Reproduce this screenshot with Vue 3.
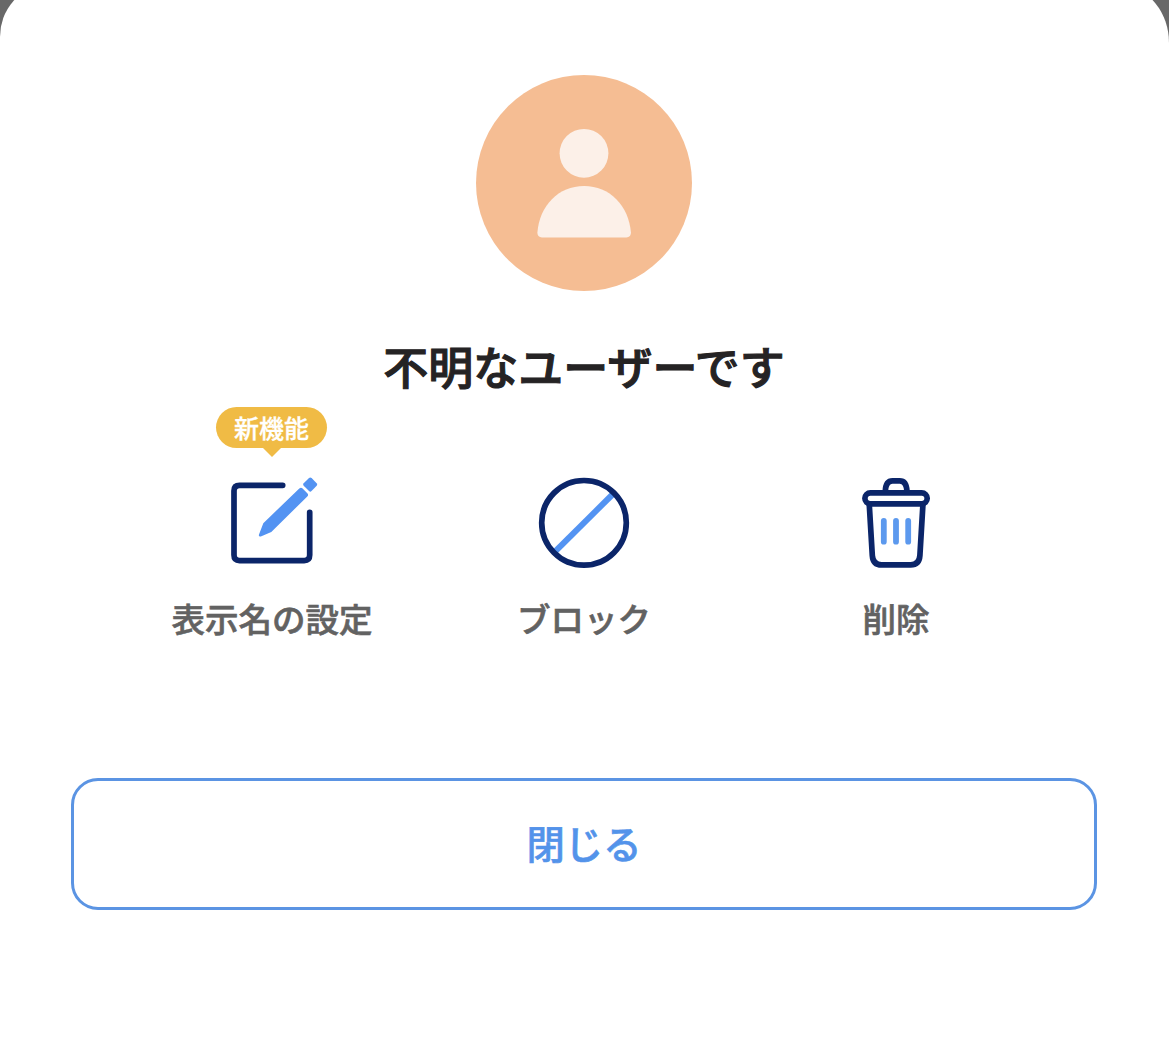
<script setup>
const actions = [
  { id: 'rename', label: '表示名の設定', badge: '新機能' },
  { id: 'block', label: 'ブロック' },
  { id: 'delete', label: '削除' },
]
</script>

<template>
  <div class="backdrop">
    <main class="sheet">
      <svg class="avatar" viewBox="0 0 216 216" aria-hidden="true">
        <circle cx="108" cy="108" r="108" fill="#f5bd93" />
        <circle cx="108" cy="78.3" r="24.4" fill="#fcf0e8" />
        <path
          d="M66 162.500C63 162.500 61.200 160.300 61.400 157.300C63.500 130.500 82.500 110.900 108.100 110.900C133.700 110.900 152.700 130.500 154.900 157.300C155.100 160.300 153.300 162.500 150.300 162.500Z"
          fill="#fcf0e8"
        />
      </svg>
      <h1 class="title">不明なユーザーです</h1>
      <div class="actions">
        <button v-for="action in actions" :key="action.id" class="action" type="button">
          <span v-if="action.badge" class="badge">{{ action.badge }}</span>
          <svg v-if="action.id === 'rename'" class="icon" viewBox="0 0 100 100">
            <path class="line" d="M60.700 12.300H17.500Q12 12.300 12 17.800V82.100Q12 87.600 17.500 87.600H82.200Q87.700 87.600 87.700 82.100V39.300" />
            <path class="fill" d="M37 61.500L41.300 50.200L77.300 15.500Q79 13.900 80.600 15.500L85.300 20.200Q86.900 21.900 85.300 23.500L49.300 58.900L38.800 63.500Q36.300 64 37 61.500Z" />
            <path class="fill" d="M81.700 10.300L87 5.100Q88.300 4 89.600 5.100L94.600 10.200Q95.800 11.500 94.700 12.800L89.500 18.100Q88.300 19.200 87 18L81.700 12.800Q80.500 11.500 81.700 10.300Z" />
          </svg>
          <svg v-else-if="action.id === 'block'" class="icon" viewBox="0 0 100 100">
            <path class="slash" d="M21 78.700L79.500 20.500" />
            <circle class="line" cx="50" cy="49.800" r="42.300" />
          </svg>
          <svg v-else class="icon" viewBox="0 0 100 100">
            <path class="line" d="M39.300 18.500C39.500 11.500 42 7.900 46.500 7.900H53.700C58.200 7.900 60.700 11.500 61 18.500" />
            <rect class="line" x="18.900" y="19.800" width="62.300" height="11" rx="5.500" />
            <path class="line" d="M23.300 32L26.300 82.500Q27 91.900 35.500 91.900H64.700Q73.200 91.900 73.900 82.500L76.900 32" />
            <path class="bars" d="M37.800 47.800V68.700M50 47.800V68.700M62.200 47.800V68.700" />
          </svg>
          <span class="label">{{ action.label }}</span>
        </button>
      </div>
      <button class="close" type="button"><span>閉じる</span></button>
    </main>
  </div>
</template>

<style>
body {
  margin: 0;
  background: #fff;
}
</style>

<style scoped>
.backdrop {
  height: 1051px;
  overflow: hidden;
  background: #686868;
  font-family: "Noto Sans CJK JP", "Noto Sans", sans-serif;
}
.sheet {
  box-sizing: border-box;
  height: 1064px;
  margin-top: -13px;
  padding: 88px 72px 0 71px;
  display: flex;
  flex-direction: column;
  align-items: center;
  background: #fff;
  border-radius: 44px 46px 0 0 / 50px 56px 0 0;
}
.avatar {
  width: 216px;
  height: 216px;
  flex: none;
}
.title {
  margin: 40px 0 0;
  height: 70px;
  font-size: 45px;
  line-height: 70px;
  font-weight: 500;
  -webkit-text-stroke: 1.100px #252324;
  color: #252324;
  white-space: nowrap;
}
.actions {
  display: flex;
  margin-top: 72px;
}
.action {
  position: relative;
  width: 312px;
  padding: 0;
  display: flex;
  flex-direction: column;
  align-items: center;
  border: 0;
  background: none;
  font-family: inherit;
}
.icon {
  width: 100px;
  height: 100px;
}
.line {
  fill: none;
  stroke: #0b2569;
  stroke-width: 5.700;
  stroke-linecap: round;
  stroke-linejoin: round;
}
.fill {
  fill: #5393f2;
}
.slash {
  stroke: #5393f2;
  stroke-width: 6;
}
.bars {
  stroke: #5c99ee;
  stroke-width: 5.800;
  stroke-linecap: round;
}
.label {
  margin-top: 20px;
  font-size: 33.500px;
  line-height: 50px;
  font-weight: 500;
  -webkit-text-stroke: 0.600px #626262;
  color: #626262;
  white-space: nowrap;
}
.badge {
  position: absolute;
  top: -66.500px;
  left: 100px;
  width: 111px;
  height: 41.500px;
  border-radius: 21px;
  background: #f0bb45;
  color: #fff;
  font-size: 25px;
  line-height: 40px;
  font-weight: 500;
  -webkit-text-stroke: 0.300px #fff;
  text-align: center;
}
.badge::after {
  content: "";
  position: absolute;
  top: 41px;
  left: 46.500px;
  border: 9px solid transparent;
  border-top-color: #f0bb45;
  border-bottom: 0;
}
.close {
  box-sizing: border-box;
  width: 1026px;
  height: 132px;
  margin-top: 135px;
  padding: 0 0 4px;
  border: 3px solid #5b94e3;
  border-radius: 27px;
  background: #fff;
  color: #5393ea;
  font-family: inherit;
  font-size: 38.300px;
  font-weight: 500;
  -webkit-text-stroke: 0.600px #5393ea;
}
</style>
